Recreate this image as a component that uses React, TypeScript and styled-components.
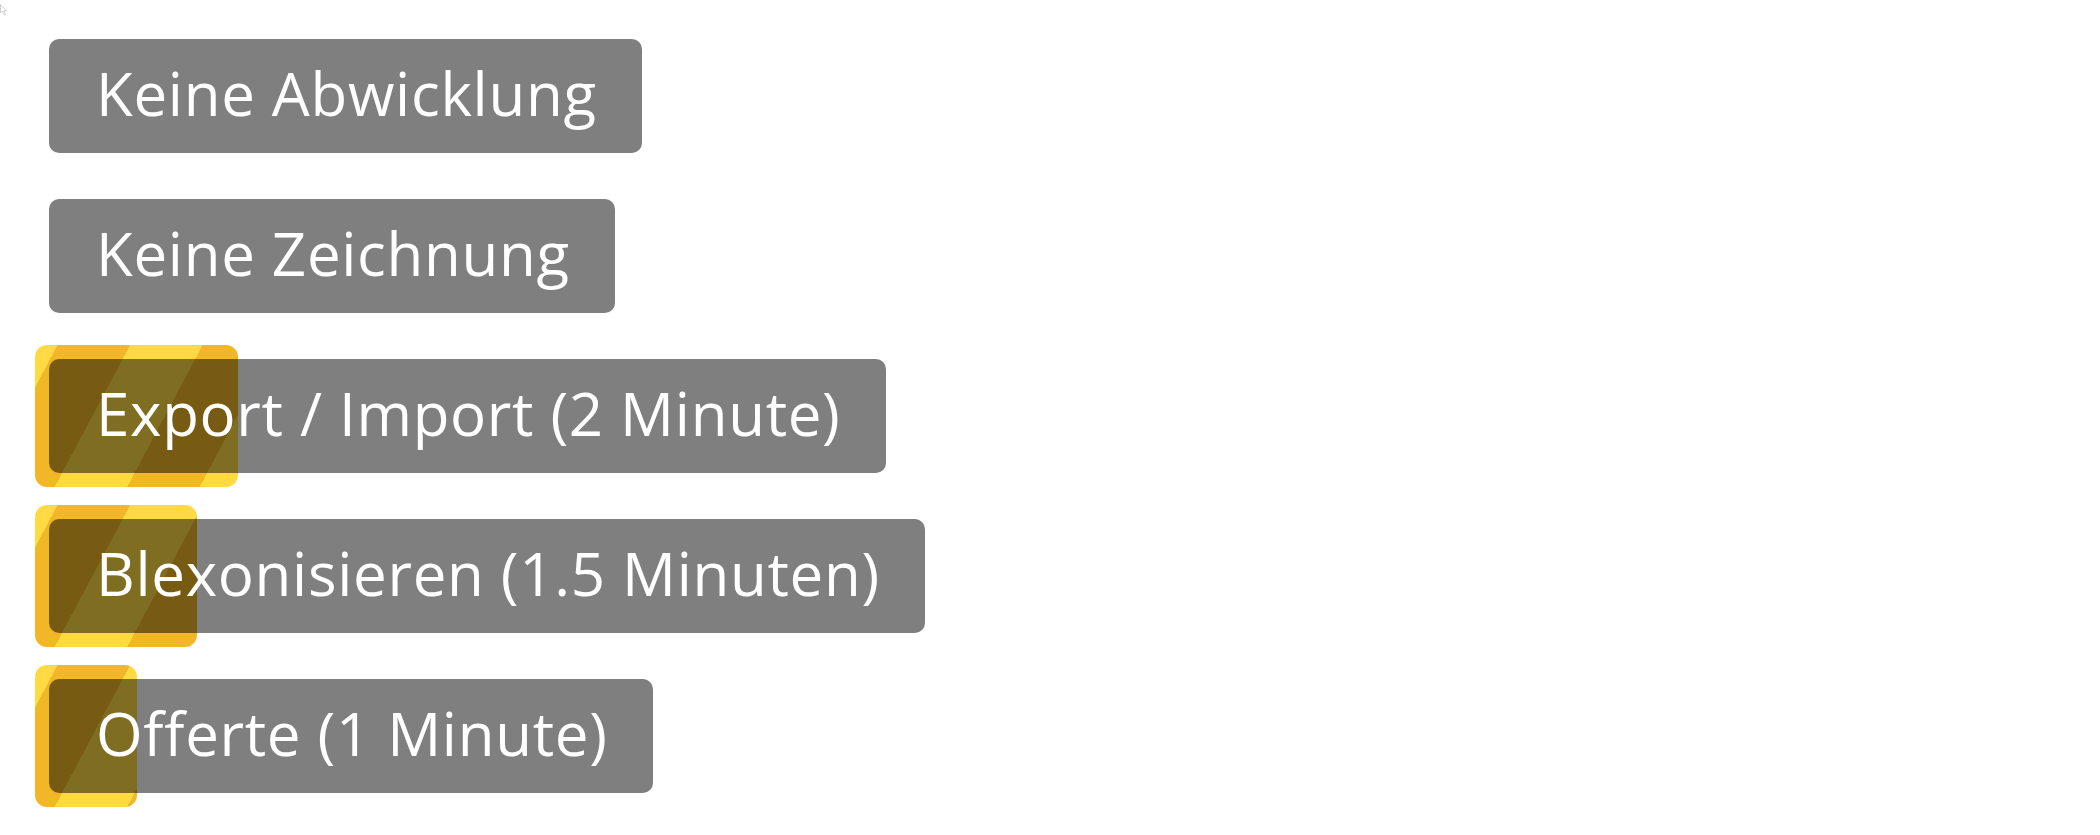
import React from "react";
import styled, { createGlobalStyle } from "styled-components";

const GlobalStyle = createGlobalStyle`
  html, body {
    margin: 0;
    padding: 0;
    background: #fff;
  }
`;

const Page = styled.div`
  position: relative;
  display: flex;
  flex-direction: column;
  align-items: flex-start;
  gap: 46px;
  padding: 39px 0 40px 49px;
  font-family: "Open Sans", "Noto Sans", sans-serif;
`;

const Row = styled.div`
  position: relative;
  display: flex;
`;

// striped progress bar lying under the step button
const Progress = styled.div`
  position: absolute;
  left: -14px;
  top: -14px;
  bottom: -14px;
  border-radius: 12px;
  background: repeating-linear-gradient(
    118deg,
    #ffda42 -44px,
    #ffda42 20px,
    #f1b726 20px,
    #f1b726 84px
  );
  z-index: 0;
`;

const Step = styled.div`
  position: relative;
  z-index: 1;
  padding: 12.5px 45px 19.5px 47px;
  border-radius: 10px;
  background: rgba(0, 0, 0, 0.5);
  color: #fff;
  font-size: 60px;
  letter-spacing: 0.7px;
  line-height: 82px;
  white-space: nowrap;
`;

const Cursor = styled.svg`
  position: absolute;
  left: 0;
  top: 4px;
`;

interface StepItem {
  label: string;
  progress?: number;
}

const steps: StepItem[] = [
  { label: "Keine Abwicklung" },
  { label: "Keine Zeichnung" },
  { label: "Export / Import (2 Minute)", progress: 203 },
  { label: "Blexonisieren (1.5 Minuten)", progress: 162 },
  { label: "Offerte (1 Minute)", progress: 102 },
];

const App: React.FC = () => {
  return (
    <>
      <GlobalStyle />
      <Page>
        <Cursor width="8" height="12" viewBox="0 0 8 12">
          <path d="M0.5 0.5 L0.5 9 L2.5 7 L4.5 11 L5.5 10.5 L3.8 6.8 L6.5 6.8 Z" fill="#fff" stroke="#c8c8c8" strokeWidth="0.8" />
        </Cursor>
        {steps.map((s, i) => (
          <Row key={i}>
            {s.progress !== undefined && <Progress style={{ width: s.progress }} />}
            <Step>{s.label}</Step>
          </Row>
        ))}
      </Page>
    </>
  );
};

export default App;
